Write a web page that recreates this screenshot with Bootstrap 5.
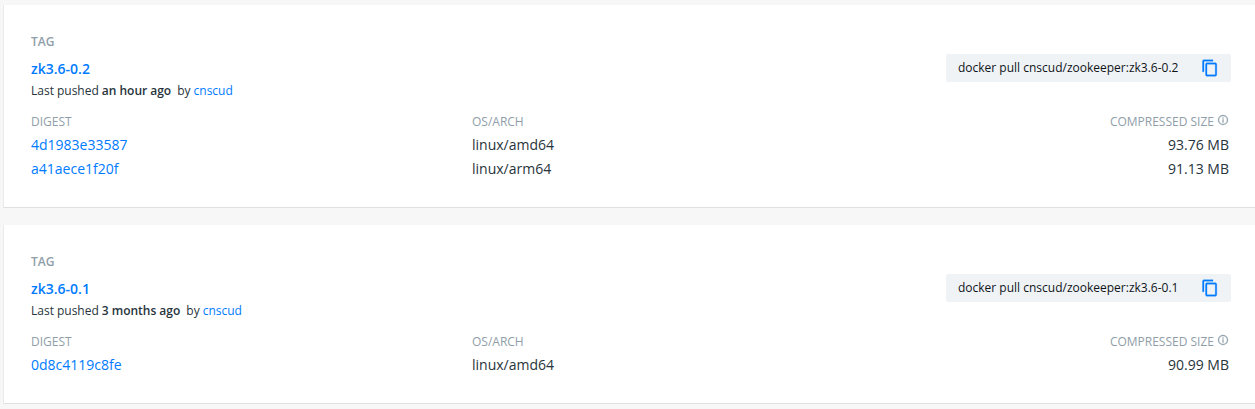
<!DOCTYPE html>
<html lang="en">
<head>
<meta charset="utf-8">
<meta name="viewport" content="width=device-width, initial-scale=1">
<title>cnscud/zookeeper tags</title>
<link href="https://cdn.jsdelivr.net/npm/bootstrap@5.3.0/dist/css/bootstrap.min.css" rel="stylesheet">
<style>
body { background: #f7f7f7; color: #27343b; font-family: "Open Sans", sans-serif; font-size: 12px; line-height: 16px; overflow: hidden; }
a { color: #007bff; text-decoration: none; }
.tag-list { padding: 5px 0 0 3px; gap: 17px; }
.tag-card { border: 0 solid #e0e0e0; border-width: 0 0 1px 1px; border-left-color: #ebebeb; border-radius: 0; padding: 29px 24px 26px 27px; }
.label-text { color: #8f9ea8; }
.tag-label { font-weight: 600; }
.tag-name { font-size: 14px; line-height: 24px; font-weight: 600; margin-top: 7px; }
.pushed { line-height: 20px; word-spacing: -.1px; }
.pull-box { width: 285px; height: 28px; background: #eff3f6; color: #101418; border-radius: 2px; margin-top: 20px; padding: 0 12px; }
.images { margin-top: 13px; padding-right: 2px; }
.images .label-text { margin-bottom: 3px; }
.images .value { font-size: 14px; line-height: 24px; }
.col-digest { width: 441px; }
.info-icon { margin-left: 3px; }
</style>
</head>
<body>
<svg class="d-none" xmlns="http://www.w3.org/2000/svg">
<symbol id="copy" viewBox="0 0 24 24"><path d="M16 1H4c-1.100 0-2 .9-2 2v14h2V3h12V1zm3 4H8c-1.100 0-2 .9-2 2v14c0 1.100.9 2 2 2h11c1.100 0 2-.9 2-2V7c0-1.100-.9-2-2-2zm0 16H8V7h11v14z" stroke="#007bff" stroke-width=".4"/></symbol>
<symbol id="info" viewBox="0 0 24 24"><path d="M11 17h2v-6h-2v6zm1-15a10 10 0 1 0 0 20 10 10 0 0 0 0-20zm0 18a8 8 0 1 1 0-16 8 8 0 0 1 0 16zM11 9h2V7h-2v2z" stroke="#8f9ea8" stroke-width=".5"/></symbol>
</svg>
<main class="tag-list d-flex flex-column">
<section class="tag-card card">
<div class="d-flex justify-content-between">
<div>
<div class="label-text tag-label">TAG</div>
<div class="tag-name"><a href="#">zk3.6-0.2</a></div>
<div class="pushed">Last pushed <span class="fw-semibold">an hour ago</span>&nbsp; by <a href="#">cnscud</a></div>
</div>
<div class="pull-box d-flex align-items-center justify-content-between"><span>docker pull cnscud/zookeeper:zk3.6-0.2</span><svg width="18" height="18" fill="#007bff"><use href="#copy"/></svg></div>
</div>
<div class="images d-flex">
<div class="col-digest"><div class="label-text">DIGEST</div><div class="value"><a href="#">4d1983e33587</a></div><div class="value"><a href="#">a41aece1f20f</a></div></div>
<div class="flex-grow-1"><div class="label-text">OS/ARCH</div><div class="value">linux/amd64</div><div class="value">linux/arm64</div></div>
<div class="text-end"><div class="label-text d-flex">COMPRESSED SIZE<svg class="info-icon" width="12" height="12" fill="#8f9ea8"><use href="#info"/></svg></div><div class="value">93.76 MB</div><div class="value">91.13 MB</div></div>
</div>
</section>
<section class="tag-card card">
<div class="d-flex justify-content-between">
<div>
<div class="label-text tag-label">TAG</div>
<div class="tag-name"><a href="#">zk3.6-0.1</a></div>
<div class="pushed">Last pushed <span class="fw-semibold">3 months ago</span>&nbsp; by <a href="#">cnscud</a></div>
</div>
<div class="pull-box d-flex align-items-center justify-content-between"><span>docker pull cnscud/zookeeper:zk3.6-0.1</span><svg width="18" height="18" fill="#007bff"><use href="#copy"/></svg></div>
</div>
<div class="images d-flex">
<div class="col-digest"><div class="label-text">DIGEST</div><div class="value"><a href="#">0d8c4119c8fe</a></div></div>
<div class="flex-grow-1"><div class="label-text">OS/ARCH</div><div class="value">linux/amd64</div></div>
<div class="text-end"><div class="label-text d-flex">COMPRESSED SIZE<svg class="info-icon" width="12" height="12" fill="#8f9ea8"><use href="#info"/></svg></div><div class="value">90.99 MB</div></div>
</div>
</section>
</main>
<script src="https://cdn.jsdelivr.net/npm/bootstrap@5.3.0/dist/js/bootstrap.bundle.min.js"></script>
</body>
</html>
